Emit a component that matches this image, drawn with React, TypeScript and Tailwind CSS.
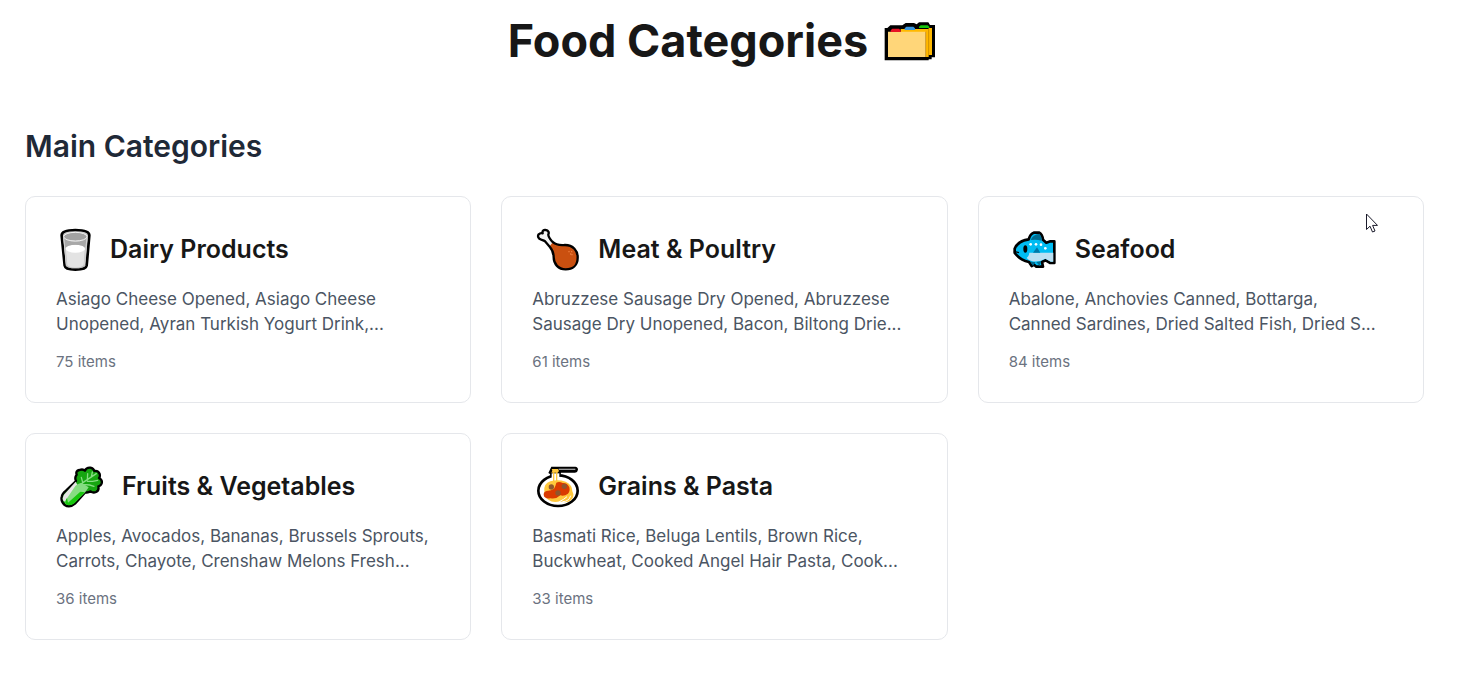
import React from 'react';

const FolderIcon = () => (
  <svg viewBox="60 18 183 150" className="w-[61px] h-[50px]" aria-hidden="true">
    <path d="M74 54H82L91 46H127L137 39H162L170 43L177 37H205L210 45H225V142H215V148H206V151H74Z" fill="#000" />
    <path d="M122 57H206V141H197V66H122Z" fill="#ffb900" />
    <path d="M206 54H216V135H206Z" fill="#ffb900" />
    <path d="M84 65H197V141H84Z" fill="#ffd679" />
    <path d="M92 66V61L97 56H117L122 61V66Z" fill="#e81224" />
    <path d="M134 60V55L139 50H160L165 55V60Z" fill="#3a96dd" />
    <path d="M177 54V50L182 46H203L208 50V54Z" fill="#16c60c" />
    <path d="M198 62V141M207 56V135" stroke="#f2a000" strokeWidth="2" />
  </svg>
);

const MilkIcon = () => (
  <svg viewBox="18 21 117 135" className="w-[39px] h-[45px]" aria-hidden="true">
    <path d="M35 46C35 34 54 30 76 30C99 30 118 34 118 46L110 137C109 145 94 149 76 149C59 149 45 145 44 137Z" fill="#c8c8c8" stroke="#000" strokeWidth="8" />
    <path d="M40 50H113L105 137Q97 145 76 145Q56 145 48 137Z" fill="#bdbdbd" />
    <path d="M47 86H105L101 136Q94 143 76 143Q58 143 52 136Z" fill="#e3e3e3" />
    <ellipse cx="76" cy="86" rx="29" ry="12" fill="#fff" />
    <path d="M43 54Q52 65 76 65Q101 65 110 54L106 83Q98 74 76 74Q54 74 46 83Z" fill="#a8a8a8" />
    <ellipse cx="76" cy="50" rx="35" ry="13" fill="#a2a2a2" stroke="#f2f2f2" strokeWidth="3" />
    <path d="M41 53L49 136M111 53L103 136" stroke="#d4d4d4" strokeWidth="3" />
  </svg>
);

const DrumstickIcon = () => (
  <svg viewBox="21 21 153 135" className="w-[51px] h-[45px]" aria-hidden="true">
    <path d="M60 64C54 60 51 61 47 58C40 56 37 48 41 43C45 39 50 39 53 40C51 33 56 29 62 30C70 31 73 38 70 43C69 49 74 56 82 65C93 75 104 77 120 75C144 75 159 92 158 113C158 136 143 148 122 148C100 148 86 132 86 112C86 101 84 91 74 80Z" fill="#ca5010" />
    <path d="M60 64C54 60 51 61 47 58C40 56 37 48 41 43C45 39 50 39 53 40C51 33 56 29 62 30C70 31 73 38 70 43C69 49 74 56 84 66L74 79Z" fill="#f2f2f2" />
    <path d="M60 64C54 60 51 61 47 58C40 56 37 48 41 43C45 39 50 39 53 40C51 33 56 29 62 30C70 31 73 38 70 43C69 49 74 56 82 65C93 75 104 77 120 75C144 75 159 92 158 113C158 136 143 148 122 148C100 148 86 132 86 112C86 101 84 91 74 80Z" fill="none" stroke="#000" strokeWidth="7" strokeLinejoin="round" />
    <g fill="#f7894a">
      <circle cx="132" cy="95" r="2" />
      <circle cx="140" cy="95" r="2" />
      <circle cx="137" cy="102" r="2" />
      <circle cx="141" cy="104" r="2" />
    </g>
  </svg>
);

const FishIcon = () => (
  <svg viewBox="12 21 153 135" className="w-[51px] h-[45px]" aria-hidden="true">
    <path d="M29 86C35 72 50 61 71 58Q76 41 86 38H103Q112 43 114 59L124 68L136 64H148V129H136L122 121L111 126L114 140H94L87 134L80 138L72 126C50 121 37 110 29 98Z" fill="#00bcf2" stroke="#000" strokeWidth="8" strokeLinejoin="round" />
    <path d="M77 60Q84 43 103 41Q110 48 110 62Q94 57 77 60Z" fill="#006d91" />
    <path d="M76 125L84 138L91 126ZM94 126L104 138L108 124Z" fill="#006d91" />
    <path d="M73 98H145V125H137L121 116Q102 127 82 124Q70 121 65 114Q72 110 73 98Z" fill="#bae0f3" />
    <path d="M84 98L96 82L106 98Z" fill="#0078a8" />
    <ellipse cx="61" cy="87" rx="6" ry="11" fill="#000" />
    <path d="M27 94L42 98" stroke="#000" strokeWidth="4" />
    <g fill="#fff">
      <circle cx="77" cy="73" r="4" />
      <circle cx="93" cy="73" r="4" />
      <circle cx="108" cy="74" r="4" />
      <circle cx="121" cy="85" r="4" />
    </g>
  </svg>
);

const GreensIcon = () => (
  <svg viewBox="18 21 153 135" className="w-[51px] h-[45px]" aria-hidden="true">
    <path d="M78 72Q73 61 80 53Q76 42 88 39Q99 35 105 41Q109 31 121 32Q131 34 133 42Q145 40 149 51Q151 59 147 63Q158 69 155 79Q152 87 145 88Q148 100 138 105Q129 109 122 103Q114 108 106 106L75 140Q59 154 44 144Q32 134 35 120Q37 109 48 101Z" fill="#16a510" stroke="#000" strokeWidth="7" strokeLinejoin="round" />
    <path d="M77 74L87 92L48 134Q38 135 38 124Q39 113 50 104Z" fill="#e6e6e6" />
    <path d="M76 87Q91 76 97 79L116 91L104 108L73 138Q60 148 47 141Q43 135 51 124Z" fill="#86dd82" />
    <path d="M48 142Q43 135 51 123L54 137L91 104L105 106L74 138Q60 149 48 142Z" fill="#16c60c" />
    <path d="M81 90L103 74L139 50M98 76L94 61M112 69L113 50M124 60L127 45M97 82L119 84L132 88M112 73L128 73L143 70" fill="none" stroke="#86dd82" strokeWidth="4" strokeLinecap="round" />
  </svg>
);

const PastaIcon = () => (
  <svg viewBox="21 21 153 135" className="w-[51px] h-[45px]" aria-hidden="true">
    <ellipse cx="99" cy="101" rx="59" ry="46" fill="#fff" stroke="#000" strokeWidth="8" />
    <path d="M70 48L79 29H151Q159 30 159 38Q158 46 150 47H108L106 58H76L75 51Z" fill="#000" />
    <path d="M80 49H103V80H80Z" fill="#fff" />
    <path d="M101 37H151" stroke="#9b9b9b" strokeWidth="4" />
    <path d="M58 104Q55 80 76 73Q98 66 122 74Q142 83 142 103Q150 118 138 130Q125 140 105 133Q84 139 70 128Q57 120 58 104Z" fill="#ffc83d" />
    <path d="M103 134Q116 128 126 119M112 134Q132 134 137 116" fill="none" stroke="#fff" strokeWidth="3" />
    <path d="M65 102Q80 101 87 95Q92 86 94 77Q103 73 113 78Q127 77 133 91Q136 103 129 110Q117 119 106 115Q94 127 77 124Q57 126 56 113Q56 104 65 102Z" fill="#da3b01" />
    <path d="M86 46V75M95 46V75" stroke="#ffc83d" strokeWidth="4" />
    <path d="M80 36H99L102 42L98 47H79L82 41Z" fill="#ffc83d" />
    <g fill="#8e562e">
      <circle cx="79" cy="90" r="8" />
      <circle cx="118" cy="88" r="8" />
      <circle cx="99" cy="108" r="8" />
    </g>
  </svg>
);

interface Category {
  name: string;
  icon: React.FC;
  preview: [string, string];
  count: number;
}

const categories: Category[] = [
  {
    name: 'Dairy Products',
    icon: MilkIcon,
    preview: ['Asiago Cheese Opened, Asiago Cheese', 'Unopened, Ayran Turkish Yogurt Drink,...'],
    count: 75,
  },
  {
    name: 'Meat & Poultry',
    icon: DrumstickIcon,
    preview: ['Abruzzese Sausage Dry Opened, Abruzzese', 'Sausage Dry Unopened, Bacon, Biltong Drie...'],
    count: 61,
  },
  {
    name: 'Seafood',
    icon: FishIcon,
    preview: ['Abalone, Anchovies Canned, Bottarga,', 'Canned Sardines, Dried Salted Fish, Dried S...'],
    count: 84,
  },
  {
    name: 'Fruits & Vegetables',
    icon: GreensIcon,
    preview: ['Apples, Avocados, Bananas, Brussels Sprouts,', 'Carrots, Chayote, Crenshaw Melons Fresh...'],
    count: 36,
  },
  {
    name: 'Grains & Pasta',
    icon: PastaIcon,
    preview: ['Basmati Rice, Beluga Lentils, Brown Rice,', 'Buckwheat, Cooked Angel Hair Pasta, Cook...'],
    count: 33,
  },
];

const CategoryCard: React.FC<{ category: Category }> = ({ category }) => {
  const Icon = category.icon;
  return (
    <article className="rounded-[10px] border border-gray-200 bg-white p-[30px]">
      <div className="flex items-center gap-[15px] mb-[15px]">
        <Icon />
        <h3 className="text-[25px] leading-[35px] font-semibold text-neutral-900">{category.name}</h3>
      </div>
      <p className="mb-[15px] text-[17px] leading-[25px] text-[#4b5563]">
        {category.preview[0]}
        <br />
        {category.preview[1]}
      </p>
      <p className="text-[15px] leading-[20px] text-[#6b7280]">{category.count} items</p>
    </article>
  );
};

export default function App() {
  return (
    <main className="min-h-screen bg-white pt-4 pb-[30px] pl-[25px] pr-[45px] font-['Inter',sans-serif]">
      <h1 className="flex items-center justify-center gap-3 mb-[60px] text-[45px] leading-[50px] font-bold text-neutral-900">
        Food Categories
        <FolderIcon />
      </h1>

      <section>
        <h2 className="mb-[30px] text-[30px] leading-[40px] font-semibold text-[#1f2937]">Main Categories</h2>
        <div className="grid grid-cols-1 md:grid-cols-2 lg:grid-cols-3 gap-[30px]">
          {categories.map((category) => (
            <CategoryCard key={category.name} category={category} />
          ))}
        </div>
      </section>

      {/* mouse pointer */}
      <svg viewBox="0 0 12 20" className="absolute left-[1366px] top-[213px] w-3 h-5" aria-hidden="true">
        <path d="M.5 1V16.5L4 13.2L6.5 19L9 18L6.6 12.4H11.5Z" fill="#fff" stroke="#1a1a2a" strokeWidth="1" />
      </svg>
    </main>
  );
}
